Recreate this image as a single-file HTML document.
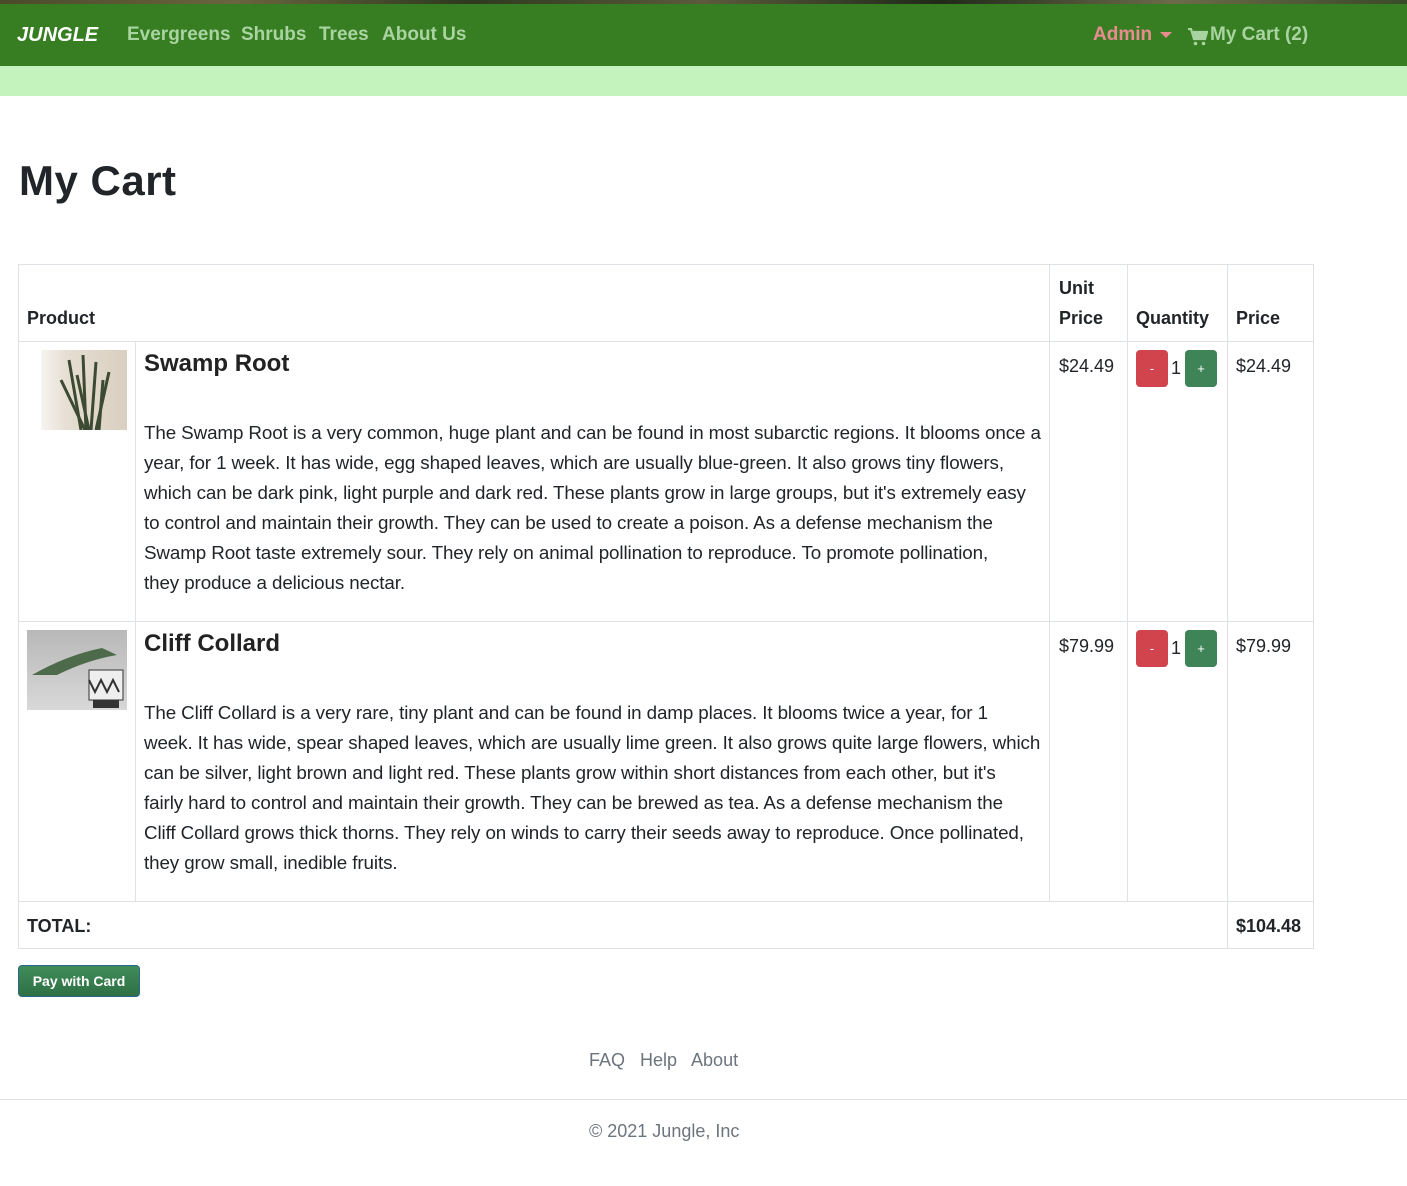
<!DOCTYPE html>
<html><head><meta charset="utf-8"><style>
*{box-sizing:border-box;margin:0;padding:0}
body{width:1407px;height:1186px;background:#fff;font-family:"Liberation Sans",sans-serif;color:#212529;position:relative;overflow:hidden}
.strip{position:absolute;top:0;left:0;width:1407px;height:4px;background:linear-gradient(90deg,#4a4a2a,#6a6440,#2d3a1e,#5b5a3c,#1f2a18,#6b6b4a,#3a4a28)}
.nav{position:absolute;top:4px;left:0;width:1407px;height:62px;background:#377e22}
.nav span{position:absolute;top:20px;font-weight:bold;font-size:19px;color:#a9d3a0}
.sub{position:absolute;top:66px;left:0;width:1407px;height:30px;background:#c5f3bd}
h1{position:absolute;left:19px;top:157px;font-size:42px;font-weight:bold;color:#212529;letter-spacing:0.5px}
.c{position:absolute;border-color:#dee2e6;border-style:solid;border-width:0}
.t{position:absolute;font-size:18px;white-space:nowrap}
.b{font-weight:bold}
.desc{position:absolute;left:144px;font-size:18.8px;line-height:30px;white-space:nowrap;letter-spacing:-0.1px}
.pn{position:absolute;left:144px;font-size:24px;font-weight:bold;color:#222}
.btn{position:absolute;width:32px;height:37px;border-radius:4px;color:#fff;font-size:13px;text-align:center;line-height:37px}
.r{background:#d1444d}.g{background:#3f8457}
</style></head><body>
<div class="strip"></div>
<div class="nav">
<span style="left:17px;color:#fff;font-style:italic;font-size:20px;font-weight:900;top:20px">JUNGLE</span>
<span style="left:127px">Evergreens</span>
<span style="left:241px">Shrubs</span>
<span style="left:319px">Trees</span>
<span style="left:382px">About Us</span>
<span style="left:1093px;color:#e88c8f">Admin</span>
<span style="left:1160px;top:28px;width:0;height:0;border-left:6px solid transparent;border-right:6px solid transparent;border-top:6px solid #e88c8f"></span>
<svg style="position:absolute;left:1188px;top:24px" width="20" height="18" viewBox="0 0 20 18"><path d="M0 1h3l3 10h11l2-7H5" fill="none" stroke="#a9d3a0" stroke-width="2.2"/><path d="M5 4h14l-2 7H7z" fill="#a9d3a0"/><circle cx="7.5" cy="15.5" r="1.8" fill="#a9d3a0"/><circle cx="15.5" cy="15.5" r="1.8" fill="#a9d3a0"/></svg>
<span style="left:1210px">My Cart (2)</span>
</div>
<div class="sub"></div>
<h1>My Cart</h1>

<div class="c" style="left:18px;top:264px;width:1296px;height:685px;border-width:1px"></div>
<div class="c" style="left:18px;top:341px;width:1296px;border-top-width:1px"></div>
<div class="c" style="left:18px;top:621px;width:1296px;border-top-width:1px"></div>
<div class="c" style="left:18px;top:901px;width:1296px;border-top-width:1px"></div>
<div class="c" style="left:135px;top:341px;height:560px;border-left-width:1px"></div>
<div class="c" style="left:1049px;top:264px;height:637px;border-left-width:1px"></div>
<div class="c" style="left:1127px;top:264px;height:637px;border-left-width:1px"></div>
<div class="c" style="left:1227px;top:264px;height:685px;border-left-width:1px"></div>

<div class="t b" style="left:27px;top:308px">Product</div>
<div class="t b" style="left:1059px;top:278px">Unit</div>
<div class="t b" style="left:1059px;top:308px">Price</div>
<div class="t b" style="left:1136px;top:308px">Quantity</div>
<div class="t b" style="left:1236px;top:308px">Price</div>

<div style="position:absolute;left:41px;top:350px;width:86px;height:80px;background:linear-gradient(90deg,#f6f4f0 0%,#e6ded2 30%,#d9cfc1 100%)">
<svg width="86" height="80" viewBox="0 0 86 80"><g stroke="#3c4a34" stroke-width="3" fill="none"><path d="M40 80L28 10"/><path d="M45 80L42 5"/><path d="M50 80L55 12"/><path d="M55 80L68 22"/><path d="M48 80L36 25"/><path d="M58 80L62 30"/><path d="M44 80L20 30"/></g></svg></div>
<div class="pn" style="top:350px">Swamp Root</div>
<div class="desc" style="top:418px">The Swamp Root is a very common, huge plant and can be found in most subarctic regions. It blooms once a<br>year, for 1 week. It has wide, egg shaped leaves, which are usually blue-green. It also grows tiny flowers,<br>which can be dark pink, light purple and dark red. These plants grow in large groups, but it's extremely easy<br>to control and maintain their growth. They can be used to create a poison. As a defense mechanism the<br>Swamp Root taste extremely sour. They rely on animal pollination to reproduce. To promote pollination,<br>they produce a delicious nectar.</div>
<div class="t" style="left:1059px;top:356px">$24.49</div>
<div class="btn r" style="left:1136px;top:350px">-</div>
<div class="t" style="left:1171px;top:358px">1</div>
<div class="btn g" style="left:1185px;top:350px">+</div>
<div class="t" style="left:1236px;top:356px">$24.49</div>

<div style="position:absolute;left:27px;top:630px;width:100px;height:80px;background:linear-gradient(180deg,#b8b8b8,#d8d8d8)">
<svg width="100" height="80" viewBox="0 0 100 80"><path d="M5 45Q40 25 75 18L90 25Q60 30 30 45z" fill="#4d6b4a"/><rect x="62" y="40" width="34" height="30" fill="#eee" stroke="#333"/><path d="M62 50l6 12 6-12 6 12 6-12 6 12" stroke="#333" fill="none" stroke-width="2"/><rect x="66" y="70" width="26" height="8" fill="#333"/></svg></div>
<div class="pn" style="top:630px">Cliff Collard</div>
<div class="desc" style="top:698px">The Cliff Collard is a very rare, tiny plant and can be found in damp places. It blooms twice a year, for 1<br>week. It has wide, spear shaped leaves, which are usually lime green. It also grows quite large flowers, which<br>can be silver, light brown and light red. These plants grow within short distances from each other, but it's<br>fairly hard to control and maintain their growth. They can be brewed as tea. As a defense mechanism the<br>Cliff Collard grows thick thorns. They rely on winds to carry their seeds away to reproduce. Once pollinated,<br>they grow small, inedible fruits.</div>
<div class="t" style="left:1059px;top:636px">$79.99</div>
<div class="btn r" style="left:1136px;top:630px">-</div>
<div class="t" style="left:1171px;top:638px">1</div>
<div class="btn g" style="left:1185px;top:630px">+</div>
<div class="t" style="left:1236px;top:636px">$79.99</div>

<div class="t b" style="left:27px;top:916px">TOTAL:</div>
<div class="t b" style="left:1236px;top:916px">$104.48</div>

<div style="position:absolute;left:18px;top:965px;width:122px;height:32px;border-radius:4px;background:linear-gradient(#3f8c5a,#2f7044);border:1px solid #2a6690;color:#fff;font-size:14px;font-weight:bold;text-align:center;line-height:30px">Pay with Card</div>

<div class="t" style="left:589px;top:1050px;color:#6c757d">FAQ&nbsp;&nbsp; Help&nbsp;&nbsp; About</div>
<div class="c" style="left:0;top:1099px;width:1407px;border-top-width:1px"></div>
<div class="t" style="left:589px;top:1121px;color:#6c757d">© 2021 Jungle, Inc</div>
</body></html>
